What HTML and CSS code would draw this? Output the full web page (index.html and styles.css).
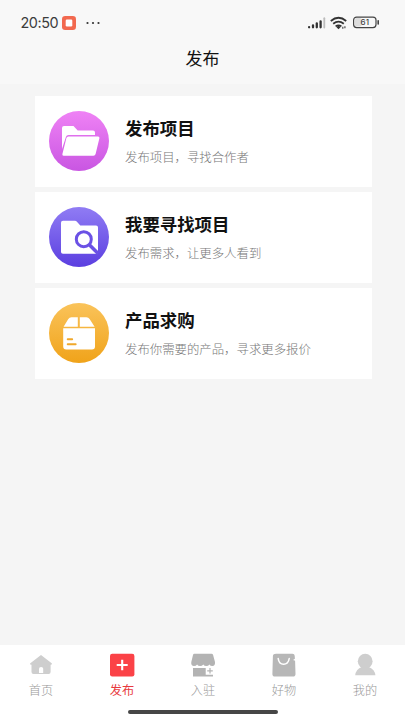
FILE: index.html
```html
<!DOCTYPE html>
<html lang="zh-CN">
<head>
<meta charset="utf-8">
<title>发布</title>
<link rel="stylesheet" href="styles.css">
</head>
<body>
<div class="app">
  <header class="status">
    <span class="time">20:50</span>
    <svg class="rec" width="14" height="14" viewBox="0 0 14 14"><rect width="14" height="14" rx="3.2" fill="#f2694f"/><rect x="3.7" y="3.5" width="6.6" height="7" rx="1.2" fill="#fff"/></svg>
    <svg class="dots" width="14" height="4" viewBox="0 0 14 4" fill="#333"><circle cx="1.5" cy="2" r="1.1"/><circle cx="7" cy="2" r="1.1"/><circle cx="12.5" cy="2" r="1.1"/></svg>
    <svg class="system" width="74" height="16" viewBox="0 0 74 16">
      <g stroke="#333" stroke-width="2.3" stroke-linecap="round"><path d="M2.1 12.2v.1M6 10.3v2M9.8 8.3v4M13.6 6.3v6"/><path stroke="#bdbdbd" stroke-width="1.8" d="M17.3 3.2v9.3"/></g>
      <g fill="none" stroke="#333" stroke-width="1.8"><path d="M23.8 6q7.7-6.4 15.400 0M26.200 8.800q5.300-4.400 10.600 0M28.600 11.400q2.900-2.200 5.800 0"/></g>
      <path d="M29.3 12l2.2-1.3 2.2 1.3-2.2 2.2z" fill="#333"/>
      <path d="M35.800 11.800v2M37.900 11.200v2" stroke="#555" stroke-width="1.300"/>
      <rect x="48" y="3" width="6.5" height="8.6" rx="1.5" fill="#ddd"/>
      <rect x="46.6" y="2.1" width="22.4" height="10.5" rx="3" fill="none" stroke="#444" stroke-width="1.2"/>
      <path d="M71.2 5.8v3.1" stroke="#444" stroke-width="1.6" stroke-linecap="round"/>
      <text class="level" x="57.8" y="10.2" text-anchor="middle">61</text>
    </svg>
  </header>
  <h1 class="title">发布</h1>
  <main class="cards">
    <section class="card">
      <svg class="icon" viewBox="0 0 60 60">
        <defs><linearGradient id="pink" x2="0" y2="1"><stop stop-color="#ef82f5"/><stop offset="1" stop-color="#c956e2"/></linearGradient></defs>
        <circle cx="30" cy="30" r="30" fill="url(#pink)"/>
        <path d="M13 38V17q0-2 2-2h9.5l4.2 4.5H44q2 0 2 2V24H19.5q-2 0-2.6 2z" fill="#fff"/>
        <path d="M19.5 25.4H49q1.8 0 1.4 1.8L46.6 43q-.4 1.800-2.200 1.800H14.600q-1.700 0-1.200-1.800L17.400 27q.4-1.600 2.100-1.600z" fill="#fff"/>
      </svg>
      <div class="copy"><h2>发布项目</h2><p>发布项目，寻找合作者</p></div>
    </section>
    <section class="card">
      <svg class="icon" viewBox="0 0 60 60">
        <defs><linearGradient id="violet" x2="0" y2="1"><stop stop-color="#907cf4"/><stop offset="1" stop-color="#5b3fe0"/></linearGradient></defs>
        <circle cx="30" cy="30" r="30" fill="url(#violet)"/>
        <path d="M14 13.7h12q1 0 1.700.8l3.600 3.900H47q2 0 2 2V45q0 1.800-2 1.800H14q-2 0-2-1.800V15.700q0-2 2-2z" fill="#fff"/>
        <circle cx="34.8" cy="32.2" r="7.500" fill="none" stroke="#6b51e5" stroke-width="3"/>
        <path d="M40.300 37.800l8.800 8.800" stroke="#6b51e5" stroke-width="3.500"/>
      </svg>
      <div class="copy"><h2>我要寻找项目</h2><p>发布需求，让更多人看到</p></div>
    </section>
    <section class="card">
      <svg class="icon" viewBox="0 0 60 60">
        <defs><linearGradient id="amber" x2="0" y2="1"><stop stop-color="#fac35a"/><stop offset="1" stop-color="#f0a31a"/></linearGradient></defs>
        <circle cx="30" cy="30" r="30" fill="url(#amber)"/>
        <path d="M22.5 14.3h6.3v9.4H14.6l4.7-7.7q1.100-1.700 3.200-1.700zM30.800 14.300h6.600q2.100 0 3.200 1.700l5 7.700H30.800zM14.200 25.300H46v18.200q0 3-3 3H17.200q-3 0-3-3z" fill="#fff"/>
        <path d="M18.7 36.3h4.5M18.700 41.200h8" stroke="#f0a82b" stroke-width="1.9" stroke-linecap="round"/>
      </svg>
      <div class="copy"><h2>产品求购</h2><p>发布你需要的产品，寻求更多报价</p></div>
    </section>
  </main>
  <nav class="tabs">
    <a class="tab"><svg viewBox="0 0 26 26"><path d="M13 2L24 10.600l-.6 1.200H22.600V19q0 2-2 2H5.500q-2 0-2-2v-7.200H2.500L2 10.600z" fill="#cecece"/><path d="M11 20v-4.200q0-1.700 2.100-1.700t2.100 1.700V20z" fill="#fff"/></svg><span>首页</span></a>
    <a class="tab active"><svg viewBox="0 0 26 26"><rect x="1" y=".7" width="24.4" height="22.8" rx="2.2" fill="#fb4247"/><path d="M13.200 6.700v10.600M7.700 12h11" stroke="#fff" stroke-width="2.100"/></svg><span>发布</span></a>
    <a class="tab"><svg viewBox="0 0 26 26"><path d="M4.300.8h17.200q1.200 0 1.600 1.200L25 9q.3 3.800-2.600 4-2.100 0-3-1.500-1.100 1.500-3.100 1.500t-3-1.500q-1.200 1.500-3.200 1.500t-3-1.500Q6 13 4 13 .8 12.800 1.300 9L3 2Q3.300.8 4.300.8z" fill="#b3b3b3"/><path d="M3 15h12.700v6.700H23v1.800H3z" fill="#b3b3b3"/><path d="M20 15v5.600M17.200 17.800h5.600" stroke="#b3b3b3" stroke-width="1.200"/></svg><span>入驻</span></a>
    <a class="tab"><svg viewBox="0 0 26 26"><path d="M5 .8h16.500q2 0 2.200 2l.2 3-1.800 1.100 2 .9.400 13q.2 2.800-2.600 2.800h-18Q1.200 23.600 1.400 20.800L1.900 3Q2.100.8 5 .8z" fill="#b7b7b7"/><path d="M7.200 5.600Q8 11.200 12.600 11.200T18.200 5.600" fill="none" stroke="#fff" stroke-width="1.500" stroke-linecap="round"/></svg><span>好物</span></a>
    <a class="tab"><svg viewBox="0 0 26 26"><ellipse cx="13.200" cy="8.300" rx="7.400" ry="7.500" fill="#cecece"/><path d="M9.500 14h7.400q5.900 2.500 6.500 8.200H3.200Q3.800 16.500 9.500 14z" fill="#cecece"/></svg><span>我的</span></a>
  </nav>
  <div class="home"></div>
</div>
</body>
</html>
```
FILE: styles.css
```css
* { box-sizing: border-box; margin: 0; padding: 0; }
body {
  background: #f5f5f5;
  font-family: "Noto Sans CJK SC", sans-serif;
}
.app {
  width: 405px;
  height: 720px;
  display: flex;
  flex-direction: column;
  overflow: hidden;
}
.status {
  height: 46px;
  padding: 0 24px 0 20.5px;
  display: flex;
  align-items: center;
  background: #f8f8f8;
  flex: none;
}
.time {
  width: 37px;
  font: 14.4px/20px Inter, sans-serif;
  letter-spacing: -0.45px;
  color: #3c3c3c;
  white-space: nowrap;
}
.rec { margin-left: 4px; }
.dots { margin-left: 10px; }
.system { margin-left: auto; }
.level { font: 500 8px Inter, sans-serif; fill: #444; }
.title {
  height: 38px;
  flex: none;
  background: #f8f8f8;
  text-align: center;
  font-size: 17px;
  line-height: 24px;
  font-weight: 400;
  color: #111;
}
.cards {
  flex: 1;
  padding: 12px 33.5px 0 35px;
  display: flex;
  flex-direction: column;
  gap: 5px;
}
.card {
  height: 91px;
  padding-left: 14px;
  display: flex;
  background: #fff;
}
.icon { width: 60px; height: 60px; margin-top: 15px; flex: none; }
.copy { margin: 19px 0 0 16px; white-space: nowrap; }
.copy h2 { font-size: 17.4px; line-height: 26px; font-weight: 700; color: #111; }
.copy p { margin-top: 7px; font-size: 12.4px; line-height: 18px; font-weight: 300; color: #777; }
.tabs {
  height: 64px;
  padding-top: 8px;
  display: flex;
  flex: none;
  background: #fff;
}
.tab {
  flex: 1;
  display: flex;
  flex-direction: column;
  align-items: center;
  font-size: 12.2px;
  line-height: 18px;
  font-weight: 300;
  color: #999;
}
.tab svg { width: 26px; height: 26px; }
.tab span { margin: 2px 0 0 1px; }
.tab.active { color: #e8393e; font-weight: 400; }
.home { height: 11px; flex: none; background: #fff; }
.home::before {
  content: "";
  display: block;
  width: 150px;
  height: 4px;
  margin: 1px auto 0;
  border-radius: 2px;
  background: #464646;
}
```
